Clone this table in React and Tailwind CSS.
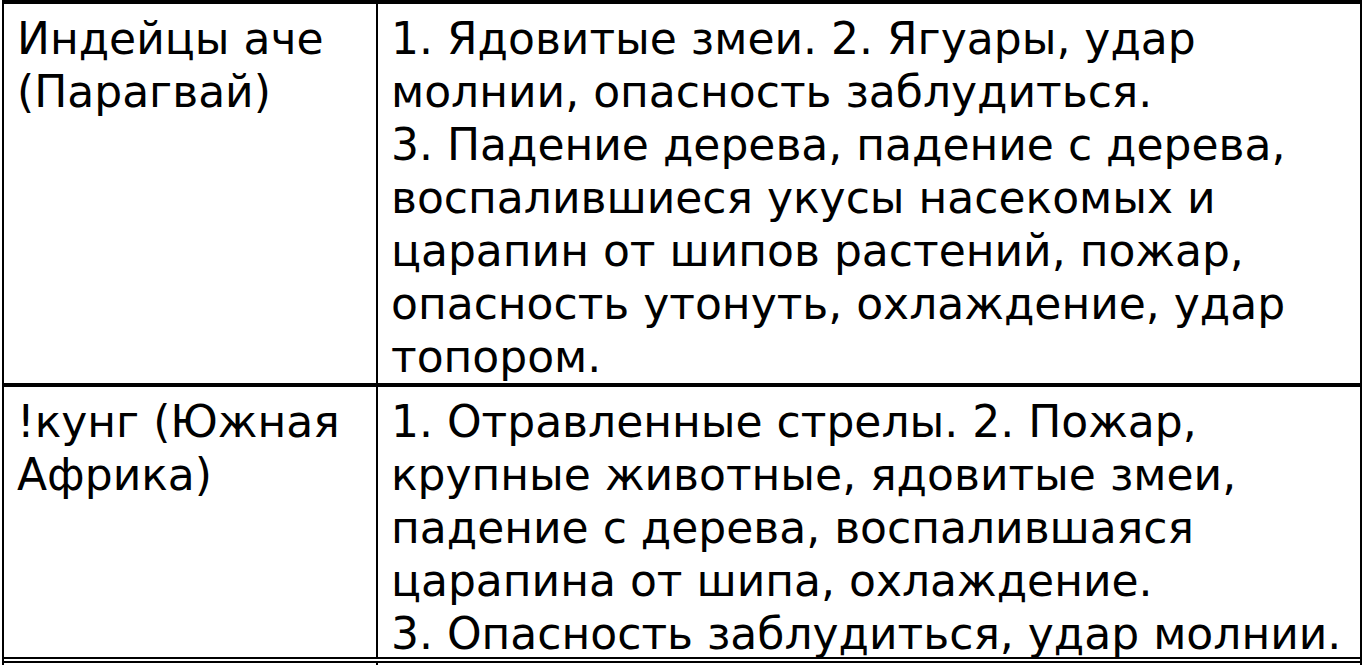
export default function App() {
  const font = { fontFamily: '"DejaVu Sans", Verdana, sans-serif' };
  const line = "block whitespace-nowrap";
  return (
    <div className="w-[1363px] h-[665px] overflow-hidden bg-white text-black" style={font}>
      <div className="ml-[2px] w-[1360px] border-t-4 border-l-2 border-r-2 border-black text-[44px] leading-[53px]">
        <div className="flex border-b-4 border-black">
          <div className="w-[374px] shrink-0 border-r-2 border-black pl-[13px] pt-[8px]">
            <span className={line}>Индейцы аче</span>
            <span className={line}>(Парагвай)</span>
          </div>
          <div className="flex-1 pl-[13px] pt-[8px]">
            <span className={line}>1. Ядовитые змеи. 2. Ягуары, удар</span>
            <span className={line}>молнии, опасность заблудиться.</span>
            <span className={line}>3. Падение дерева, падение с дерева,</span>
            <span className={line}>воспалившиеся укусы насекомых и</span>
            <span className={line}>царапин от шипов растений, пожар,</span>
            <span className={line}>опасность утонуть, охлаждение, удар</span>
            <span className={line}>топором.</span>
          </div>
        </div>
        <div className="flex border-b-2 border-black h-[272px]">
          <div className="w-[374px] shrink-0 border-r-2 border-black pl-[13px] pt-[8px]">
            <span className={line}>!кунг (Южная</span>
            <span className={line}>Африка)</span>
          </div>
          <div className="flex-1 pl-[13px] pt-[8px]">
            <span className={line}>1. Отравленные стрелы. 2. Пожар,</span>
            <span className={line}>крупные животные, ядовитые змеи,</span>
            <span className={line}>падение с дерева, воспалившаяся</span>
            <span className={line}>царапина от шипа, охлаждение.</span>
            <span className={line}>3. Опасность заблудиться, удар молнии.</span>
          </div>
        </div>
        <div className="mt-[2px] flex border-t-2 border-black h-[60px]">
          <div className="w-[374px] shrink-0 border-r-2 border-black"></div>
          <div className="flex-1"></div>
        </div>
      </div>
    </div>
  );
}
